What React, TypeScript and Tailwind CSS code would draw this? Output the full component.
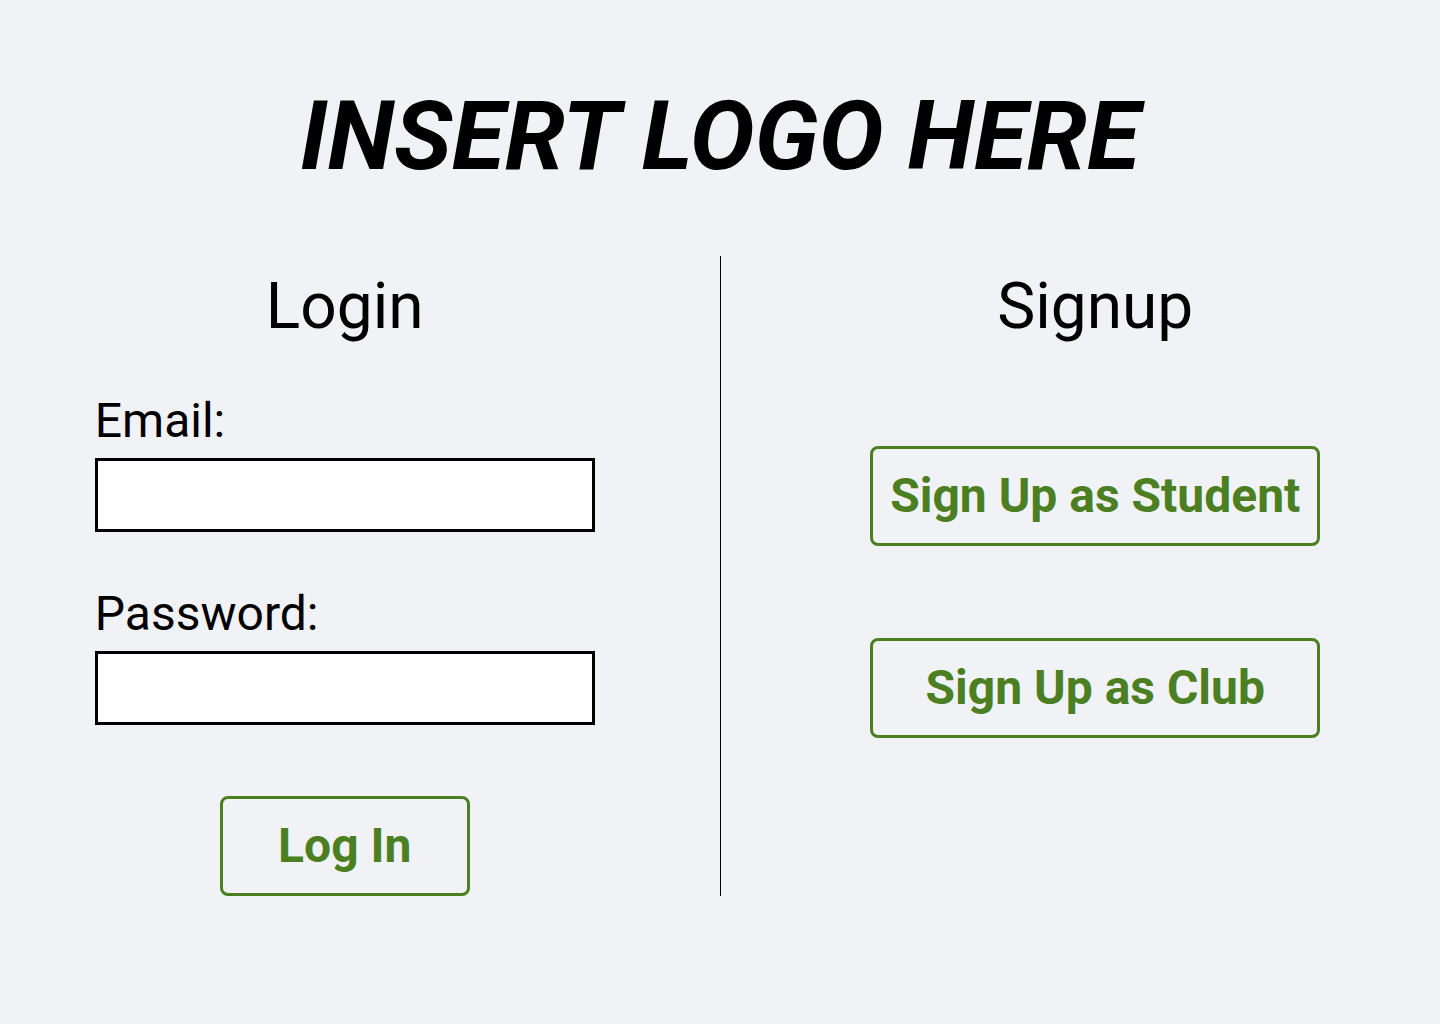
import React from 'react';

const green = 'border-[#4b7f22] text-[#4b7f22]';

const App: React.FC = () => {
  return (
    <div
      className="min-h-screen w-full bg-[#f0f2f5] text-black"
      style={{ fontFamily: 'Roboto, "Noto Sans", sans-serif' }}
    >
      <h1 className="pt-[88px] text-center text-[97px] font-bold italic leading-none">
        INSERT LOGO HERE
      </h1>

      <div className="mt-[71px] flex">
        {/* login */}
        <div className="flex flex-1 flex-col items-center pt-[19px]">
          <h2 className="text-[64px] leading-none">Login</h2>
          <form className="flex w-[500px] flex-col" onSubmit={(e) => e.preventDefault()}>
            <label className="mt-[58px] text-[48px] leading-none">Email:</label>
            <input type="email" className="mt-[13px] h-[74px] w-full border-[3px] border-black bg-white px-3 text-2xl outline-none" />
            <label className="mt-[58px] text-[48px] leading-none">Password:</label>
            <input type="password" className="mt-[13px] h-[74px] w-full border-[3px] border-black bg-white px-3 text-2xl outline-none" />
            <button
              type="submit"
              className={`mx-auto mt-[71px] h-[100px] w-[250px] rounded-lg border-[3px] text-[48px] font-bold leading-none ${green}`}
            >
              Log In
            </button>
          </form>
        </div>

        <div className="mx-[30px] w-px bg-black" />

        {/* signup */}
        <div className="flex flex-1 flex-col items-center pt-[19px]">
          <h2 className="text-[64px] leading-none">Signup</h2>
          <button className={`mt-[107px] h-[100px] w-[450px] rounded-lg border-[3px] text-[48px] font-bold leading-none ${green}`}>
            Sign Up as Student
          </button>
          <button className={`mt-[92px] h-[100px] w-[450px] rounded-lg border-[3px] text-[48px] font-bold leading-none ${green}`}>
            Sign Up as Club
          </button>
        </div>
      </div>
    </div>
  );
};

export default App;
